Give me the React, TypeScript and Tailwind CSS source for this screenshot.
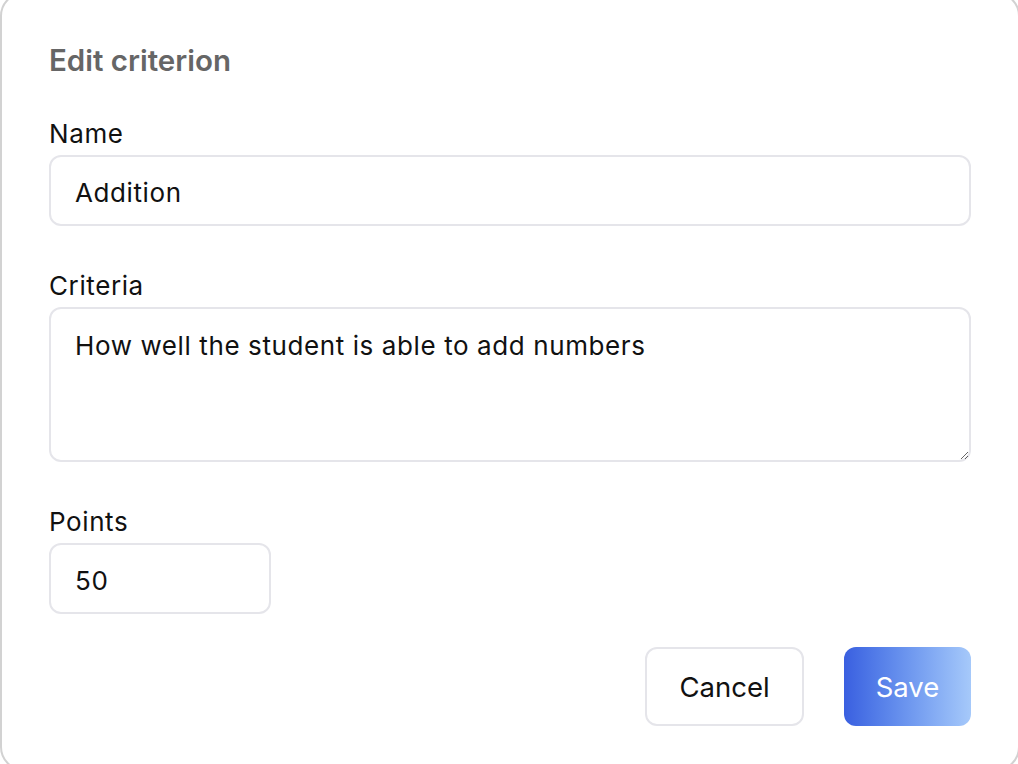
import React from "react";

function Field({label, children}: {label: string; children: React.ReactNode}) {
    return (
        <div className="flex flex-col gap-[7px]">
            <label className="text-[26px] leading-[28px] tracking-[0.6px] text-[#111]">{label}</label>
            {children}
        </div>
    );
}

export default function App() {
    return (
        <div className="h-screen w-screen overflow-hidden bg-white font-['Inter',sans-serif]">
            <div className="-mt-2 h-[779px] w-[1020px] rounded-[24px] border-2 border-[#d2d2d2] bg-white px-[47px] pt-[48px]">
                <h2 className="text-[29.5px] leading-[36px] font-semibold text-[#666]">Edit criterion</h2>

                <div className="mt-[42px] flex flex-col gap-[46px]">
                    <Field label="Name">
                        <input
                            readOnly
                            value="Addition"
                            className="h-[71px] w-full rounded-[12px] border-2 border-[#e5e5ea] bg-white px-[24px] pt-[4px] text-[26px] tracking-[0.6px] text-[#111] outline-none"
                        />
                    </Field>

                    <Field label="Criteria">
                        <textarea
                            readOnly
                            value="How well the student is able to add numbers"
                            className="h-[155px] w-full rounded-[12px] border-2 border-[#e5e5ea] bg-white px-[24px] pt-[22px] text-[26px] leading-[30px] tracking-[0.6px] text-[#111] outline-none"
                        />
                    </Field>

                    <Field label="Points">
                        <input
                            readOnly
                            value="50"
                            className="h-[71px] w-[222px] rounded-[12px] border-2 border-[#e5e5ea] bg-white px-[24px] pt-[4px] text-[26px] tracking-[0.6px] text-[#111] outline-none"
                        />
                    </Field>
                </div>

                <div className="mt-[33px] flex justify-end gap-[40px]">
                    <button className="h-[79px] w-[159px] rounded-[12px] border-2 border-[#e5e5ea] bg-white pt-[2px] text-[27.5px] text-[#111]">
                        Cancel
                    </button>
                    <button className="h-[79px] w-[127px] rounded-[12px] bg-linear-to-r from-[#3a5fe0] to-[#a6c9fa] pt-[2px] text-[27.5px] text-white">
                        Save
                    </button>
                </div>
            </div>
        </div>
    );
}
